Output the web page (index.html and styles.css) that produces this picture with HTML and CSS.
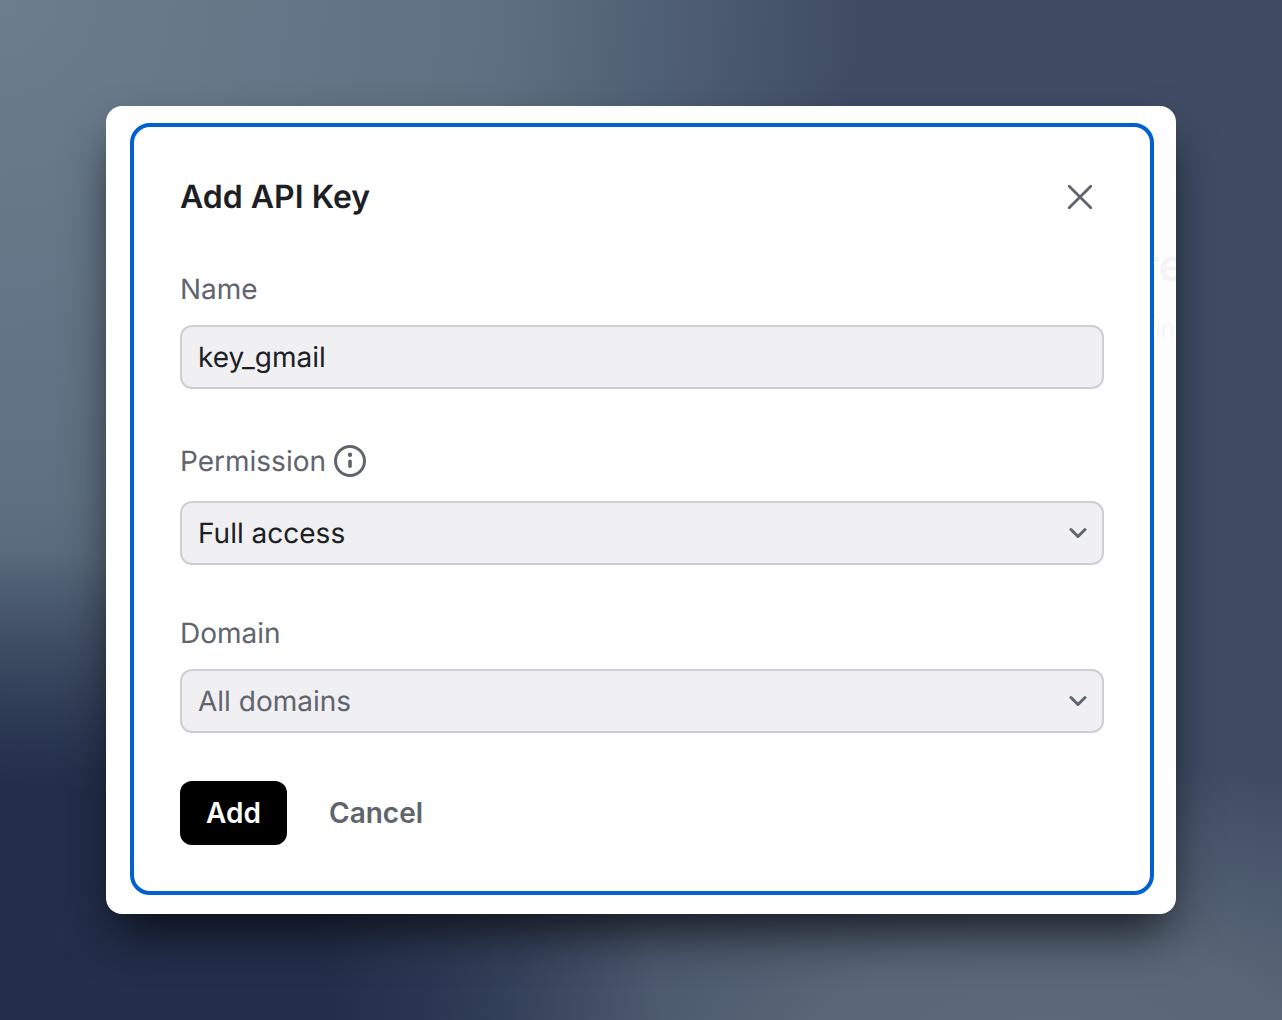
FILE: index.html
```html
<!DOCTYPE html>
<html lang="en">
<head>
<meta charset="utf-8">
<title>Add API Key</title>
<link rel="stylesheet" href="styles.css">
</head>
<body>
<div class="backdrop">
  <div class="modal">
    <span class="ghost ghost-a">re</span>
    <span class="ghost ghost-b">in</span>
    <form class="panel">
      <header class="head">
        <h1 class="title">Add API Key</h1>
        <svg class="close" width="28" height="28" viewBox="0 0 28 28" fill="none"><path d="M3.2 3.200l21.600 21.600M24.800 3.200l-21.600 21.600" stroke="#60646c" stroke-width="2.800" stroke-linecap="round"/></svg>
      </header>
      <div class="field f-name">
        <label class="label">Name</label>
        <div class="control">key_gmail</div>
      </div>
      <div class="field f-perm">
        <label class="label">Permission
          <svg class="info" width="32" height="32" viewBox="0 0 32 32" fill="none"><circle cx="16" cy="16" r="14.500" stroke="#60646c" stroke-width="3"/><rect x="14.200" y="14.500" width="3.600" height="8.500" rx="1.800" fill="#60646c"/><circle cx="16" cy="9.800" r="2.200" fill="#60646c"/></svg>
        </label>
        <div class="control select">Full access
          <svg class="chev" width="18" height="12" viewBox="0 0 18 12" fill="none"><path d="M2 2.500l7 7 7-7" stroke="#60646c" stroke-width="3" stroke-linecap="round" stroke-linejoin="round"/></svg>
        </div>
      </div>
      <div class="field f-domain">
        <label class="label">Domain</label>
        <div class="control select muted">All domains
          <svg class="chev" width="18" height="12" viewBox="0 0 18 12" fill="none"><path d="M2 2.500l7 7 7-7" stroke="#60646c" stroke-width="3" stroke-linecap="round" stroke-linejoin="round"/></svg>
        </div>
      </div>
      <div class="actions">
        <button class="btn primary" type="button">Add</button>
        <button class="btn ghost-btn" type="button">Cancel</button>
      </div>
    </form>
  </div>
</div>
</body>
</html>
```
FILE: styles.css
```css
* { box-sizing: border-box; }
html, body { margin: 0; height: 100%; }
body { font-family: Inter, "Liberation Sans", sans-serif; overflow: hidden; text-rendering: geometricPrecision; }
.backdrop {
  width: 1282px; height: 1020px; padding: 106px;
  background:
    radial-gradient(ellipse 660px 470px at 0 1020px, #222e4a 0%, #222e4a 50%, rgba(34,46,74,0) 100%),
    radial-gradient(ellipse 620px 300px at 1050px 1060px, #5c6a7b 0%, #586677 40%, rgba(88,102,119,0) 100%),
    radial-gradient(ellipse 860px 860px at 0 0, #6c7e8e 0%, #5e7081 58%, rgba(94,112,129,0) 100%),
    #3f4c64;
}
.modal {
  position: relative; overflow: hidden;
  width: 1070px; height: 808px; padding: 17px 22px 19px 24px;
  background: #fff; border-radius: 16px;
}
.backdrop .modal { box-shadow: 0 25px 50px -10px rgba(0,0,0,.75); }
.ghost { position: absolute; color: #f4f4f5; font-weight: 600; }
.ghost-a { left: 1036px; top: 137px; font-size: 44px; line-height: 44px; }
.ghost-b { left: 1049px; top: 211px; font-size: 24px; line-height: 24px; color: #f6f6f7; font-weight: 400; }
.panel {
  position: relative; height: 772px; background: #fff;
  border: 4px solid #0060d0; border-radius: 20px;
  padding: 0 46px; display: flex; flex-direction: column;
}
.head { display: flex; justify-content: space-between; align-items: center; height: 40px; margin-top: 50px; padding-right: 10px; }
.title { margin: 0; font-size: 32px; line-height: 40px; font-weight: 600; color: #1c2024; }
.field { display: flex; flex-direction: column; gap: 20px; }
.f-name { margin-top: 56px; }
.f-perm { margin-top: 56px; gap: 24px; }
.f-domain { margin-top: 52px; }
.label { display: flex; align-items: center; gap: 8px; height: 32px; font-size: 28px; line-height: 32px; color: #60646c; }
.control {
  display: flex; align-items: center; justify-content: space-between;
  height: 64px; padding: 0 15px 0 16px;
  background: #f0f0f3; border: 2px solid #cdced6; border-radius: 12px;
  font-size: 28px; color: #1c2024;
}
.muted { color: #60646c; }
.actions { display: flex; align-items: center; gap: 42px; margin-top: 48px; }
.btn { font: 600 28px Inter, "Liberation Sans", sans-serif; border: 0; background: none; padding: 0; }
.primary { width: 107px; height: 64px; background: #000; color: #fff; border-radius: 12px; }
.ghost-btn { color: #60646c; }
```
